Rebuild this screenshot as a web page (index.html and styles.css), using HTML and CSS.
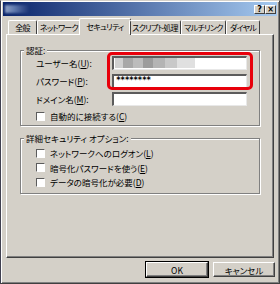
FILE: index.html
```html
<!DOCTYPE html>
<html>
<head>
    <meta charset="UTF-8" />
    <title>プロパティ</title>
    <link rel="stylesheet" href="styles.css">
</head>

<body>
    <div class="window">
        <div class="titlebar">
            <div class="title-blur"></div>
            <div class="caption-btns">
                <span class="cap-btn">?</span>
                <span class="cap-btn">×</span>
            </div>
        </div>

        <div class="tabs">
            <div class="tab t-general">全般</div>
            <div class="tab t-network">ネットワーク</div>
            <div class="tab t-security active">セキュリティ</div>
            <div class="tab t-script">スクリプト処理</div>
            <div class="tab t-multi">マルチリンク</div>
            <div class="tab t-dial">ダイヤル</div>
        </div>

        <div class="panel">
            <div class="group auth">
                <span class="group-title">認証:</span>
                <div class="field-row">
                    <label>ユーザー名(<u>U</u>):</label>
                    <div class="textbox"><div class="mosaic"></div></div>
                </div>
                <div class="field-row">
                    <label>パスワード(<u>P</u>):</label>
                    <div class="textbox">********</div>
                </div>
                <div class="field-row">
                    <label>ドメイン名(<u>M</u>):</label>
                    <div class="textbox"></div>
                </div>
                <div class="check-row">
                    <span class="checkbox"></span>
                    <span>自動的に接続する(<u>C</u>)</span>
                </div>
                <div class="highlight"></div>
            </div>

            <div class="group options">
                <span class="group-title">詳細セキュリティ オプション:</span>
                <div class="check-row">
                    <span class="checkbox"></span>
                    <span>ネットワークへのログオン(<u>L</u>)</span>
                </div>
                <div class="check-row">
                    <span class="checkbox"></span>
                    <span>暗号化パスワードを使う(<u>E</u>)</span>
                </div>
                <div class="check-row">
                    <span class="checkbox"></span>
                    <span>データの暗号化が必要(<u>D</u>)</span>
                </div>
            </div>
        </div>

        <div class="buttons">
            <button class="btn default">OK</button>
            <button class="btn">キャンセル</button>
        </div>
    </div>
</body>
</html>
```

FILE: styles.css
```css
* {
    margin: 0;
    padding: 0;
    box-sizing: border-box;
}

body {
    width: 280px;
    height: 284px;
    background: #d4d0c8;
    font-family: "Noto Sans CJK JP", "Noto Sans", sans-serif;
    font-size: 8.5px;
    font-feature-settings: "palt";
    color: #000;
    overflow: hidden;
}

.window {
    width: 280px;
    height: 284px;
    border-top: 1px solid #d4d0c8;
    border-left: 1px solid #404050;
    border-right: 1px solid #404040;
    border-bottom: 1px solid #404040;
    box-shadow: inset 1px 1px 0 #fff, inset -1px -1px 0 #808080;
    padding: 1px 2px 0 2px;
    display: flex;
    flex-direction: column;
}

.titlebar {
    height: 14px;
    background: linear-gradient(to right, #0a246a, #a6caf0);
    display: flex;
    align-items: center;
    justify-content: space-between;
    padding: 0 1px 0 2px;
}

.title-blur {
    width: 24px;
    height: 8px;
    background: linear-gradient(to right, #8d9fc4, #5f79ad 40%, #3c5490 70%, #1c3677);
    filter: blur(1px);
}

.caption-btns {
    display: flex;
}

.cap-btn {
    width: 11px;
    height: 9px;
    background: #d4d0c8;
    border-top: 1px solid #fff;
    border-left: 1px solid #fff;
    border-right: 1px solid #404040;
    border-bottom: 1px solid #404040;
    font-family: "DejaVu Sans", sans-serif;
    font-size: 8px;
    font-weight: bold;
    line-height: 7px;
    text-align: center;
}

.tabs {
    display: flex;
    align-items: flex-end;
    height: 16px;
    margin-top: 2px;
    padding-left: 5px;
    position: relative;
    z-index: 1;
}

.tab {
    height: 14px;
    border-top: 1px solid #fff;
    border-left: 1px solid #fff;
    border-right: 1px solid #404040;
    border-radius: 2px 2px 0 0;
    font-size: 8px;
    letter-spacing: -0.7px;
    line-height: 13px;
    text-align: center;
    white-space: nowrap;
    overflow: hidden;
}

.t-general { width: 29px; }
.t-network { width: 44px; }
.t-script { width: 52px; }
.t-multi { width: 45px; }
.t-dial { width: 34px; }

.tab.active {
    width: 52px;
    height: 17px;
    margin: 0 -2px -1px;
    background: #d4d0c8;
    line-height: 15px;
}

.panel {
    height: 224px;
    margin: 0 3px 0 3px;
    border-top: 1px solid #fff;
    border-left: 1px solid #fff;
    border-right: 1px solid #404040;
    border-bottom: 1px solid #404040;
    box-shadow: inset -1px -1px 0 #808080;
    padding: 15px 13px 0 13px;
    display: flex;
    flex-direction: column;
    gap: 12px;
}

.group {
    border: 1px solid #808080;
    box-shadow: 1px 1px 0 #fff, inset 1px 1px 0 #fff;
    padding-left: 15px;
    position: relative;
}

.group-title {
    position: absolute;
    left: 3px;
    top: -6px;
    padding: 0 2px;
    background: #d4d0c8;
    line-height: 10px;
    white-space: nowrap;
}

.auth {
    height: 76px;
    padding-top: 3px;
}

.options {
    height: 56px;
    padding-top: 7px;
}

.field-row {
    display: flex;
    align-items: center;
    height: 18px;
}

.auth .check-row {
    margin-top: 1px;
}

.field-row label {
    width: 76px;
}

.textbox {
    width: 135px;
    height: 14px;
    background: #fff;
    border-top: 2px solid #5c5c5c;
    border-left: 2px solid #5c5c5c;
    border-right: 1px solid #e8e8e8;
    border-bottom: 1px solid #e8e8e8;
    font-family: "DejaVu Sans Mono", monospace;
    font-size: 8px;
    font-weight: bold;
    line-height: 10px;
    letter-spacing: -0.5px;
    padding-left: 2px;
}

.mosaic {
    width: 80px;
    height: 10px;
    margin-left: -1px;
    background: linear-gradient(to right, #d0d0d0 0 10%, #a8a8a8 10% 22%, #bcbcbc 22% 35%, #9c9c9c 35% 48%, #b4b4b4 48% 62%, #c8c8c8 62% 78%, #e0e0e0 78% 100%);
    filter: blur(0.6px);
}

.check-row {
    display: flex;
    align-items: center;
    gap: 5px;
    height: 14.5px;
}

.checkbox {
    width: 9px;
    height: 9px;
    background: #fff;
    border-top: 1px solid #5c5c5c;
    border-left: 1px solid #5c5c5c;
    border-right: 1px solid #fff;
    border-bottom: 1px solid #fff;
}

.highlight {
    position: absolute;
    left: 86px;
    top: 1px;
    width: 146px;
    height: 38px;
    border: 3px solid #e8000b;
    border-radius: 5px;
}

.buttons {
    display: flex;
    justify-content: flex-end;
    gap: 5px;
    margin-top: 4px;
    padding-right: 2px;
}

.btn {
    width: 62px;
    height: 15px;
    background: #d4d0c8;
    border-top: 1px solid #fff;
    border-left: 1px solid #fff;
    border-right: 1px solid #404040;
    border-bottom: 1px solid #404040;
    box-shadow: inset -1px -1px 0 #808080;
    font-family: "Noto Sans CJK JP", sans-serif;
    font-size: 8.5px;
    font-feature-settings: "palt";
    line-height: 12px;
}

.btn.default {
    box-shadow: 0 0 0 1px #000, inset -1px -1px 0 #808080;
}
```
